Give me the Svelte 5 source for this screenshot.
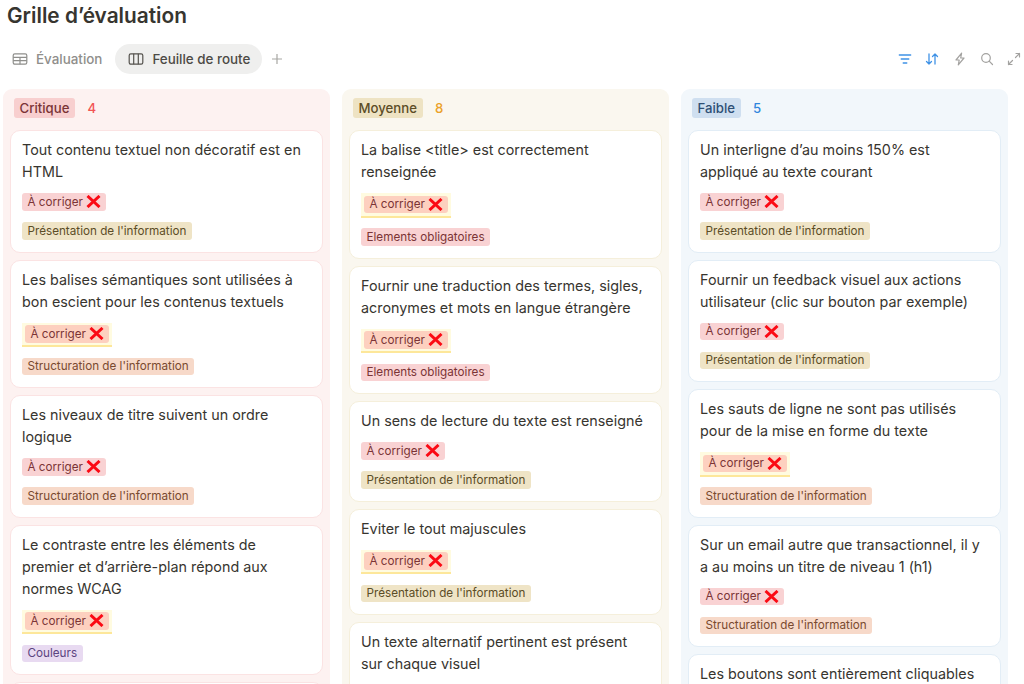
<script>
  const cat = {
    pres: ["Présentation de l'information", "yellow"],
    struct: ["Structuration de l'information", "orange"],
    elem: ["Elements obligatoires", "red"],
    coul: ["Couleurs", "purple"]
  };
  const columns = [
    { name: "Critique", count: 4, theme: "crit", cards: [
      { t: ["Tout contenu textuel non décoratif est en", "HTML"], c: "pres" },
      { t: ["Les balises sémantiques sont utilisées à", "bon escient pour les contenus textuels"], c: "struct", h: true },
      { t: ["Les niveaux de titre suivent un ordre", "logique"], c: "struct" },
      { t: ["Le contraste entre les éléments de", "premier et d’arrière-plan répond aux", "normes WCAG"], c: "coul", h: true },
      { t: [] }
    ]},
    { name: "Moyenne", count: 8, theme: "moy", cards: [
      { t: ["La balise <title> est correctement", "renseignée"], c: "elem", h: true },
      { t: ["Fournir une traduction des termes, sigles,", "acronymes et mots en langue étrangère"], c: "elem", h: true },
      { t: ["Un sens de lecture du texte est renseigné"], c: "pres" },
      { t: ["Eviter le tout majuscules"], c: "pres", h: true },
      { t: ["Un texte alternatif pertinent est présent", "sur chaque visuel"] }
    ]},
    { name: "Faible", count: 5, theme: "fai", cards: [
      { t: ["Un interligne d’au moins 150% est", "appliqué au texte courant"], c: "pres" },
      { t: ["Fournir un feedback visuel aux actions", "utilisateur (clic sur bouton par exemple)"], c: "pres" },
      { t: ["Les sauts de ligne ne sont pas utilisés", "pour de la mise en forme du texte"], c: "struct", h: true },
      { t: ["Sur un email autre que transactionnel, il y", "a au moins un titre de niveau 1 (h1)"], c: "struct" },
      { t: ["Les boutons sont entièrement cliquables"] }
    ]}
  ];
</script>

<div class="page">
  <h1>Grille d’évaluation</h1>
  <div class="toolbar">
    <div class="tabs">
      <div class="tab">
        <svg width="16" height="16" viewBox="0 0 16 16" fill="none" stroke="#8f8f8c" stroke-width="1.2"><rect x="1.2" y="2.8" width="13.6" height="10.4" rx="1.6"/><path d="M1.2 6.3h13.6M1.2 9.7h13.6M8 6.3v6.9"/></svg>
        <span>Évaluation</span>
      </div>
      <div class="tab active">
        <svg width="16" height="16" viewBox="0 0 16 16" fill="none" stroke="#55534e" stroke-width="1.2"><rect x="1.2" y="2.8" width="13.6" height="10.4" rx="1.6"/><path d="M5.7 2.8v10.4M10.3 2.8v10.4"/></svg>
        <span>Feuille de route</span>
      </div>
      <svg class="plus" width="12" height="12" viewBox="0 0 12 12" stroke="#a8a7a3" stroke-width="1.2"><path d="M6 1v10M1 6h10"/></svg>
    </div>
    <div class="tools">
      <svg width="14" height="14" viewBox="0 0 14 14" fill="none" stroke="#3f92e6" stroke-width="1.3" stroke-linecap="round"><path d="M1.3 3h11.4M3.2 7h7.6M5.2 11h3.6"/></svg>
      <svg width="14" height="14" viewBox="0 0 14 14" fill="none" stroke="#3f92e6" stroke-width="1.3" stroke-linecap="round" stroke-linejoin="round"><path d="M4 2v10M1.5 9.5 4 12l2.5-2.5M10 12V2M7.5 4.5 10 2l2.5 2.5"/></svg>
      <svg width="14" height="14" viewBox="0 0 14 14" fill="none" stroke="#a3a2a0" stroke-width="1.2" stroke-linejoin="round"><path d="M8.6 1.2 3 8h3.2l-.9 4.8L11 6H7.7z"/></svg>
      <svg width="14" height="14" viewBox="0 0 14 14" fill="none" stroke="#a3a2a0" stroke-width="1.2" stroke-linecap="round"><circle cx="6" cy="6" r="4.3"/><path d="m9.2 9.2 3.3 3.3"/></svg>
      <svg width="14" height="14" viewBox="0 0 14 14" fill="none" stroke="#a3a2a0" stroke-width="1.2" stroke-linecap="round" stroke-linejoin="round"><path d="M8.5 5.5 12.5 1.5M9 1.5h3.5V5M5.5 8.5l-4 4M1.5 9v3.5H5"/></svg>
    </div>
  </div>

  <div class="board">
    {#each columns as col}
      <section class="col {col.theme}">
        <header>
          <span class="name">{col.name}</span>
          <span class="count">{col.count}</span>
        </header>
        {#each col.cards as card}
          <article class="card">
            {#if card.t.length}
              <p class="title">{#each card.t as line}<span>{line}</span>{/each}</p>
            {/if}
            {#if card.c}
              <div class="status" class:hl={card.h}>
                <span class="tag status-tag"><span>À corriger</span><svg width="15" height="13" viewBox="0 0 15 13" fill="none" stroke="#fb0a14" stroke-width="3"><path d="M1.5 1l12 11M13.5 1l-12 11"/></svg></span>
              </div>
              <span class="tag {cat[card.c][1]}">{cat[card.c][0]}</span>
            {/if}
          </article>
        {/each}
      </section>
    {/each}
  </div>
</div>

<style>
  :global(body) { margin: 0; background: #fff; overflow: hidden; }
  .page {
    height: 684px;
    overflow: hidden;
    font-family: Inter, "Liberation Sans", sans-serif;
    color: #37352f;
  }
  h1 {
    margin: 0;
    padding: 4px 0 0 7px;
    font-size: 20.8px;
    line-height: 24px;
    font-weight: 600;
    color: #37352f;
  }
  .toolbar {
    display: flex;
    justify-content: space-between;
    align-items: center;
    height: 30px;
    margin-top: 16px;
    padding: 0 3px 0 12px;
  }
  .tabs { display: flex; align-items: center; }
  .tab {
    display: flex;
    align-items: center;
    gap: 8px;
    height: 30px;
    font-size: 13.4px;
    font-weight: 500;
    color: #8f8e8b;
  }
  .tab + .tab { margin-left: 13px; }
  .tab.active {
    padding: 0 12px 0 13px;
    background: #efefee;
    border-radius: 15px;
    color: #4c4a45;
  }
  .plus { margin-left: 9px; }
  .tools { display: flex; align-items: center; gap: 13.25px; }
  .board {
    display: flex;
    gap: 12px;
    margin-top: 15px;
    padding-left: 3px;
    align-items: flex-start;
  }
  .col {
    width: 327px;
    box-sizing: border-box;
    padding: 9px 7px 0;
    border-radius: 9px;
    display: flex;
    flex-direction: column;
    gap: 7px;
    flex: none;
    min-height: 700px;
  }
  header {
    display: flex;
    align-items: center;
    gap: 12px;
    height: 20px;
    padding-left: 3.5px;
    margin-bottom: 5px;
  }
  .name {
    height: 20px;
    line-height: 20px;
    padding: 0 6px;
    border-radius: 3px;
    font-size: 13.2px;
    font-weight: 500;
  }
  .count { font-size: 13.2px; font-weight: 500; }
  .crit { background: #fdf2f1; }
  .crit .name { background: #f8cfcf; color: #7b3436; }
  .crit .count { color: #f25555; }
  .crit .card { border-color: #fbe3e3; }
  .moy { background: #faf7ef; }
  .moy .name { background: #eee3c3; color: #5c4d26; }
  .moy .count { color: #eba22a; }
  .moy .card { border-color: #f5efdb; }
  .fai { background: #f2f7fb; }
  .fai .name { background: #cfdff0; color: #2e4f75; }
  .fai .count { color: #2f86dd; }
  .fai .card { border-color: #e2edf6; }
  .card {
    background: #fff;
    border: 1px solid #eee;
    border-radius: 10px;
    padding: 8px 11px 12px;
    display: flex;
    flex-direction: column;
    align-items: flex-start;
  }
  .title {
    margin: 0 0 10px;
    font-size: 14.35px;
    line-height: 22px;
    font-weight: 400;
    color: #37352f;
    display: flex;
    flex-direction: column;
    white-space: pre;
  }
  .status { margin-bottom: 11.5px; display: flex; }
  .status.hl {
    background: #fffbe0;
    border-bottom: 2px solid #fde79a;
    padding: 2.5px 3px;
    margin-bottom: 10.5px;
  }
  .tag {
    display: inline-flex;
    align-items: center;
    height: 17.5px;
    padding: 0 5.5px;
    border-radius: 3px;
    font-size: 11.7px;
    line-height: 18px;
    white-space: nowrap;
  }
  .status-tag { background: #f9d2d3; color: #7b3436; gap: 3px; }
  .status.hl .status-tag { background: #fdd0bf; }
  .yellow { background: #efe4c6; color: #5c4d26; }
  .orange { background: #f7d9c9; color: #7a4a30; }
  .red { background: #f9d2d3; color: #7b3436; }
  .purple { background: #e8daf1; color: #5b4480; }
</style>
